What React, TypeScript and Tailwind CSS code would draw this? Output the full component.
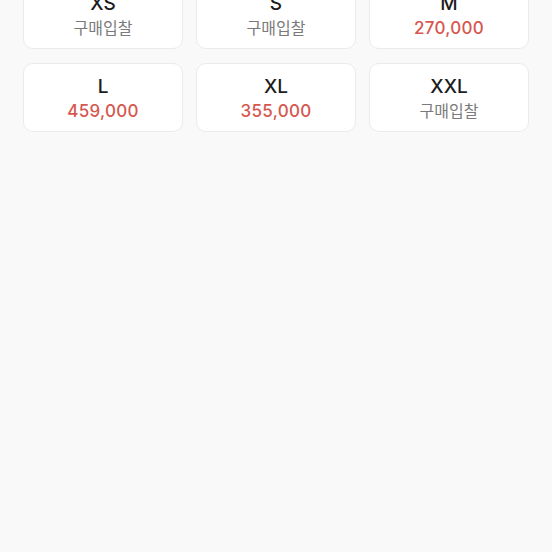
const sizes = [
  { size: "XS", price: null },
  { size: "S", price: null },
  { size: "M", price: "270,000" },
  { size: "L", price: "459,000" },
  { size: "XL", price: "355,000" },
  { size: "XXL", price: null },
];

export default function App() {
  return (
    <div
      className="min-h-[552px] w-[552px] bg-[#f9f9f9] overflow-hidden"
      style={{ fontFamily: 'Inter, "Noto Sans CJK KR", sans-serif' }}
    >
      {/* size grid */}
      <div className="grid grid-cols-3 gap-x-[13px] gap-y-[14px] px-[23px] -mt-[20px]">
        {sizes.map((s) => (
          <div
            key={s.size}
            className="h-[69px] pt-[3px] bg-white border border-[#ebebeb] rounded-[10px] flex flex-col items-center justify-center"
          >
            <span className="text-[19px] leading-[24px] font-medium text-[#1c1c1c]">{s.size}</span>
            {s.price ? (
              <span className="text-[17px] leading-[24px] font-medium tracking-[0.3px] text-[#d6574f]">{s.price}</span>
            ) : (
              <span className="text-[16px] leading-[24px] text-[#7a7a7a]">구매입찰</span>
            )}
          </div>
        ))}
      </div>
    </div>
  );
}
